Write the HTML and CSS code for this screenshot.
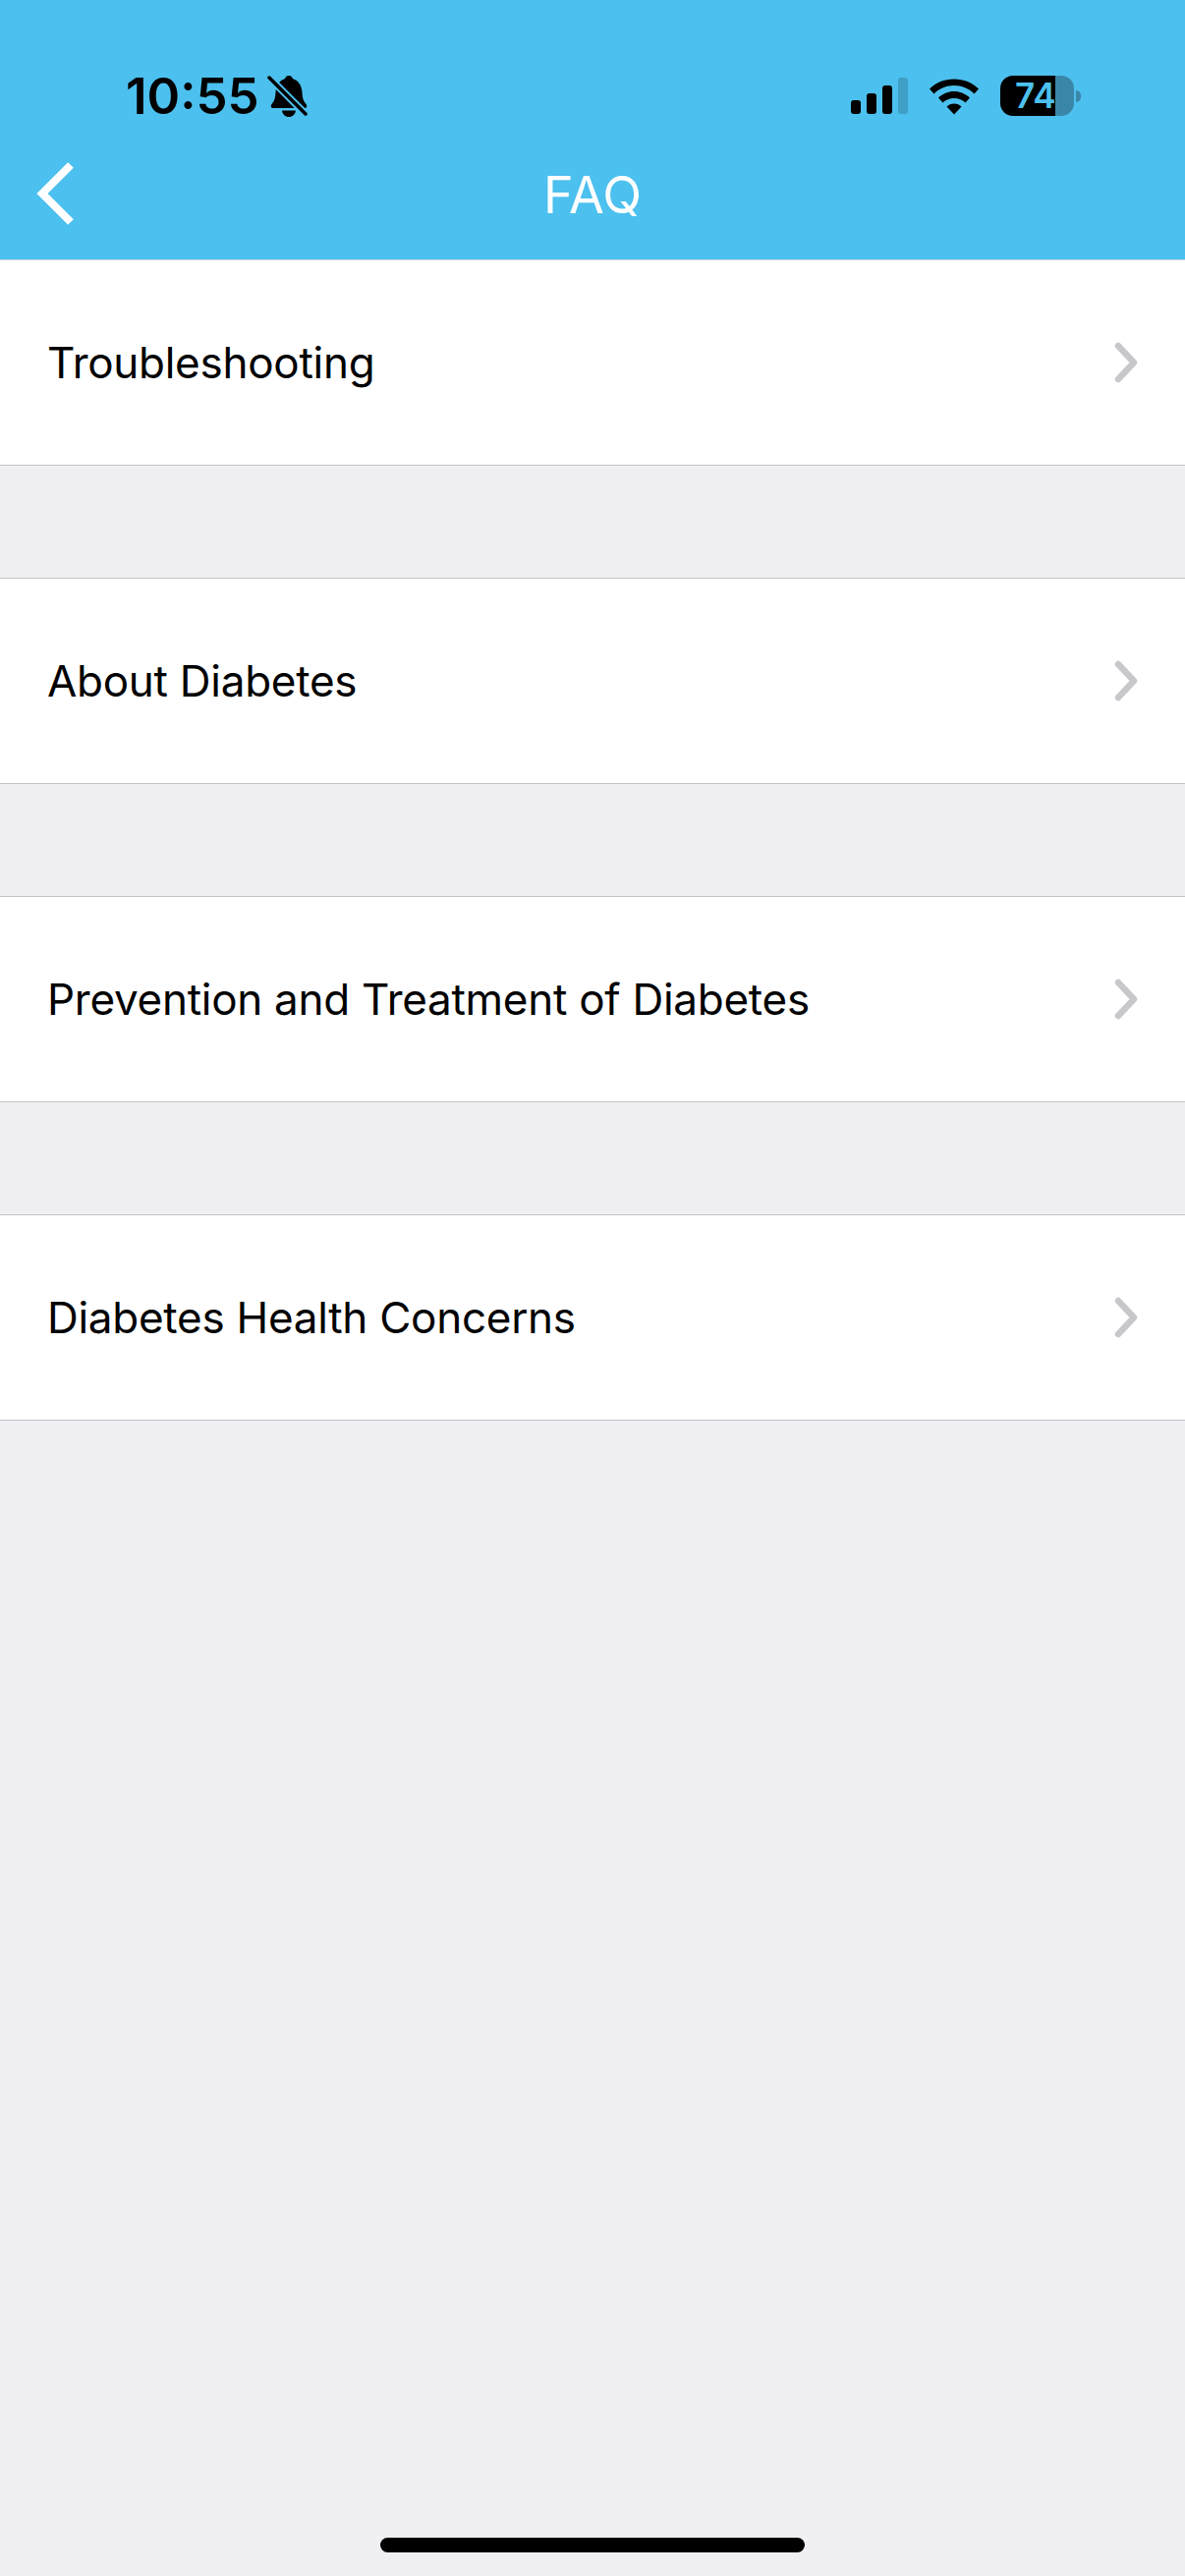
FILE: index.html
```html
<!DOCTYPE html>
<html lang="en">
<head>
    <meta charset="UTF-8">
    <title>FAQ</title>
    <link rel="stylesheet" href="styles.css">
</head>
<body>

<div class="header">
	<div class="status-bar">
		<div class="status-left">
			<span class="time">10:55</span>
			<svg class="bell" width="42" height="44" viewBox="6 7 42 44">
				<path d="M28 8c2 0 3.500 1.300 3.800 3C38 13 41 18 41.500 25c.3 6 1.500 9 4 12 1.500 1.800.5 4-1.500 4H12c-2 0-3-2.200-1.500-4 2.500-3 3.700-6 4-12C15 18 18 13 24.200 11c.3-1.700 1.800-3 3.800-3Z" fill="#000"/>
				<path d="M21 43.500h14c-.5 4-3.500 6.500-7 6.500s-6.500-2.500-7-6.500Z" fill="#000"/>
				<path d="M6 8 47 49" stroke="#4cc0ee" stroke-width="7.500"/>
				<path d="M8 10 45 47" stroke="#000" stroke-width="3.500" stroke-linecap="round"/>
			</svg>
		</div>
		<div class="status-right">
			<div class="signal">
				<span class="bar bar-1"></span>
				<span class="bar bar-2"></span>
				<span class="bar bar-3"></span>
				<span class="bar bar-4"></span>
			</div>
			<svg class="wifi" width="52" height="38" viewBox="0 0 52 38">
				<path d="M1 11.500C7.500 5 16 1.500 26 1.500S44.500 5 51 11.500l-4.500 5C41 11 34 8 26 8S11 11 5.500 16.500Z" fill="#000"/>
				<path d="M10 20.500C14.500 16.500 20 14 26 14s11.500 2.500 16 6.500l-4.500 5C34.500 22.500 30.500 21 26 21s-8.500 1.500-11.500 4.500Z" fill="#000"/>
				<path d="M18.500 29.500c2-2 4.500-3 7.500-3s5.500 1 7.500 3L26 37.500Z" fill="#000"/>
			</svg>
			<div class="battery">
				<div class="battery-body">
					<span class="battery-level">74</span>
				</div>
				<span class="battery-nub"></span>
			</div>
		</div>
	</div>
	<div class="nav-bar">
		<svg class="back" width="40" height="66" viewBox="0 0 40 66">
			<path d="M35 4 6 33 35 62" fill="none" stroke="#fff" stroke-width="8"/>
		</svg>
		<h1 class="nav-title">FAQ</h1>
	</div>
</div>

<div class="faq-list">
	<div class="faq-row">
		<span class="faq-label">Troubleshooting</span>
		<svg class="chevron" width="24" height="42" viewBox="0 0 24 42"><path d="M4 4 20 21 4 38" fill="none" stroke="#c7c7cc" stroke-width="6.500" stroke-linecap="round" stroke-linejoin="round"/></svg>
	</div>
	<div class="faq-row">
		<span class="faq-label">About Diabetes</span>
		<svg class="chevron" width="24" height="42" viewBox="0 0 24 42"><path d="M4 4 20 21 4 38" fill="none" stroke="#c7c7cc" stroke-width="6.500" stroke-linecap="round" stroke-linejoin="round"/></svg>
	</div>
	<div class="faq-row">
		<span class="faq-label">Prevention and Treatment of Diabetes</span>
		<svg class="chevron" width="24" height="42" viewBox="0 0 24 42"><path d="M4 4 20 21 4 38" fill="none" stroke="#c7c7cc" stroke-width="6.500" stroke-linecap="round" stroke-linejoin="round"/></svg>
	</div>
	<div class="faq-row">
		<span class="faq-label">Diabetes Health Concerns</span>
		<svg class="chevron" width="24" height="42" viewBox="0 0 24 42"><path d="M4 4 20 21 4 38" fill="none" stroke="#c7c7cc" stroke-width="6.500" stroke-linecap="round" stroke-linejoin="round"/></svg>
	</div>
</div>

<div class="home-area">
	<div class="home-bar"></div>
</div>

</body>
</html>
```

FILE: styles.css
```css
*{
	padding: 0;
	margin: 0;
	box-sizing: border-box;
}

body{
	width: 1206px;
	height: 2622px;
	font-family: Inter, "Liberation Sans", sans-serif;
	background-color: #efeff4;
	display: flex;
	flex-direction: column;
	overflow: hidden;
}

.header{
	height: 265px;
	background-color: #4cc0ee;
	border-bottom: 1px solid #c8d4da;
	display: flex;
	flex-direction: column;
}

.status-bar{
	height: 155px;
	padding: 70px 106px 0 128px;
	display: flex;
	justify-content: space-between;
	align-items: flex-start;
}

.status-left{
	display: flex;
	align-items: center;
	gap: 8px;
}

.time{
	font-size: 51px;
	line-height: 56px;
	font-weight: 600;
	color: #000;
}

.status-right{
	display: flex;
	align-items: center;
	gap: 21px;
	padding-top: 7px;
}

.signal{
	display: flex;
	align-items: flex-end;
	gap: 6px;
	height: 37px;
}

.bar{
	width: 10px;
	border-radius: 3px;
	background-color: #000;
}

.bar-1{ height: 14px; }
.bar-2{ height: 21px; }
.bar-3{ height: 29px; }
.bar-4{ height: 37px; background-color: #3f9fc6; }

.battery{
	display: flex;
	align-items: center;
	gap: 2px;
}

.battery-body{
	width: 75px;
	height: 41px;
	border-radius: 13px;
	background: linear-gradient(to right, #000 75%, #3a86a8 75%);
	display: flex;
	align-items: center;
	padding-left: 15px;
}

.battery-level{
	font-size: 35px;
	font-weight: 600;
	line-height: 41px;
	color: #4cc0ee;
}

.battery-nub{
	width: 5px;
	height: 12px;
	border-radius: 0 6px 6px 0;
	background-color: #3a86a8;
}

.nav-bar{
	flex: 1;
	position: relative;
	display: flex;
	justify-content: center;
	align-items: flex-start;
}

.back{
	position: absolute;
	left: 37px;
	top: 9px;
}

.nav-title{
	font-size: 52px;
	line-height: 60px;
	font-weight: 400;
	color: #fff;
	padding-top: 14px;
}

.faq-list{
	display: flex;
	flex-direction: column;
	gap: 114px;
}

.faq-row{
	height: 209px;
	background-color: #fff;
	border-bottom: 1px solid #c2c2c6;
	padding: 0 48px;
	display: flex;
	justify-content: space-between;
	align-items: center;
}

.faq-row + .faq-row{
	height: 210px;
	border-top: 1px solid #c2c2c6;
}

.faq-label{
	font-size: 44px;
	letter-spacing: -0.27px;
	color: #000;
}

.home-area{
	margin-top: auto;
	height: 39px;
	display: flex;
	justify-content: center;
}

.home-bar{
	width: 432px;
	height: 15px;
	border-radius: 8px;
	background-color: #000;
}
```
